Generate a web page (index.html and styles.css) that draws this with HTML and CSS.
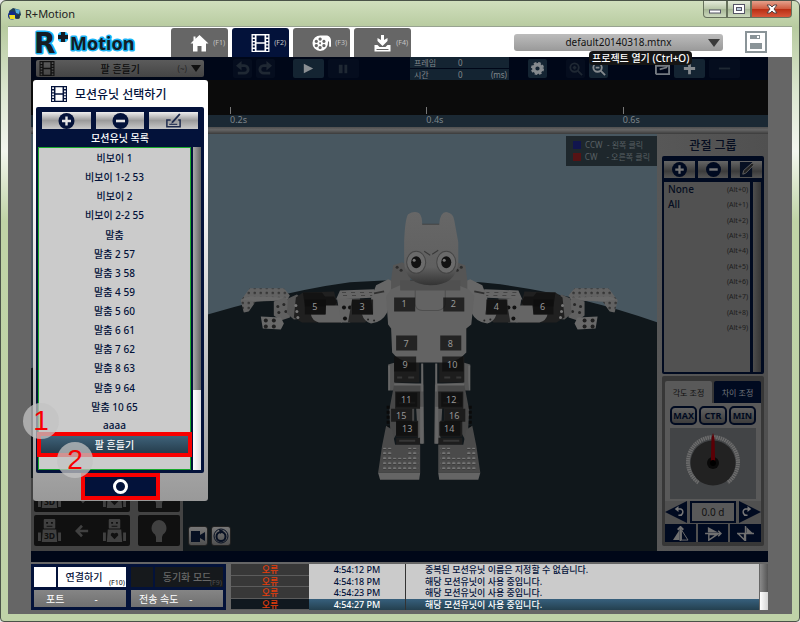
FILE: index.html
```html
<!DOCTYPE html>
<html lang="ko">
<head>
<meta charset="utf-8">
<title>R+Motion</title>
<link rel="stylesheet" href="styles.css">
</head>
<body>
<svg class="sprites" aria-hidden="true">
  <symbol id="film" viewBox="0 0 18 18">
    <path fill="currentColor" fill-rule="evenodd" d="M0 0H18V18H0ZM5 1.5V8.2H13V1.5ZM5 9.8V16.5H13V9.8ZM1.3 1.5V3.5H3.3V1.5ZM1.3 5V7H3.3V5ZM1.3 8.3V10.3H3.3V8.3ZM1.3 11.6V13.6H3.3V11.6ZM1.3 15V17H3.3V15ZM14.7 1.5V3.5H16.7V1.5ZM14.7 5V7H16.7V5ZM14.7 8.3V10.3H16.7V8.3ZM14.7 11.6V13.6H16.7V11.6ZM14.7 15V17H16.7V15Z"/>
  </symbol>
  <symbol id="plus" viewBox="0 0 16 16">
    <circle cx="8" cy="8" r="8" fill="var(--disc)"/><path d="M8 3.5V12.5M3.5 8H12.5" stroke="var(--mark)" stroke-width="2.4"/>
  </symbol>
  <symbol id="minus" viewBox="0 0 16 16">
    <circle cx="8" cy="8" r="8" fill="var(--disc)"/><path d="M3.5 8H12.5" stroke="var(--mark)" stroke-width="2.6"/>
  </symbol>
  <symbol id="edit" viewBox="0 0 18 16">
    <path d="M6 7H2V14H16V7H14" fill="none" stroke="#1d2a4d" stroke-width="1.6"/><path d="M4.5 11.5H13" stroke="#1d2a4d" stroke-width="1.2"/><path d="M16.5 1L9 9.5L6.5 11L7.5 8.2L15 0Z" fill="#1d2a4d"/>
  </symbol>
  <symbol id="undo" viewBox="0 0 16 16">
    <path d="M6 5H10A4 4 0 0 1 10 13H3" fill="none" stroke="currentColor" stroke-width="3"/><path d="M7 0V10L1 5Z" fill="currentColor"/>
  </symbol>
  <symbol id="robot" viewBox="0 0 24 24">
    <path fill="currentColor" fill-rule="evenodd" d="M7 0H17Q18 0 18 1V9Q18 10 17 10H7Q6 10 6 9V1Q6 0 7 0ZM8.500 3V5H10.500V3ZM13.500 3V5H15.500V3ZM9 7V8.200H15V7ZM5 11H19L20 24H4ZM0 14H3V23H0ZM21 14H24V23H21Z"/>
  </symbol>
  <symbol id="bulb" viewBox="0 0 16 22">
    <path fill="currentColor" d="M8 0A8 8 0 0 1 12 14.500L11 17V22H5V17L4 14.500A8 8 0 0 1 8 0Z"/>
  </symbol>
</svg>

<div class="window">
  <div class="titlebar">
    <svg class="app-icon" viewBox="0 0 14 14" aria-hidden="true">
      <path d="M1 4L5 1L12 3L13 8L9 12L2 10Z" fill="#1d3c56"/><circle cx="4" cy="8.500" r="4" fill="#122b88"/><path d="M1 8H7V12H2Z" fill="#e9dc22"/><path d="M7 2L12 3L11 7L8 6Z" fill="#52a9dc"/><circle cx="10" cy="10" r="2" fill="#234"/>
    </svg>
    <span class="app-name">R+Motion</span>
    <div class="controls">
      <button class="ctl" aria-label="최소화"><svg viewBox="0 0 12 10"><rect x=".5" y="6" width="11" height="3" fill="#fff" stroke="#556"/></svg></button>
      <button class="ctl" aria-label="최대화"><svg viewBox="0 0 12 10"><rect x=".5" y=".5" width="11" height="9" fill="#fff" stroke="#556"/><rect x="3.500" y="3.500" width="5" height="3" fill="#bcd" stroke="#556"/></svg></button>
      <button class="ctl close" aria-label="닫기"><svg viewBox="0 0 12 10"><path d="M1 1H4L6 3L8 1H11L8 5L11 9H8L6 7L4 9H1L4 5Z" fill="#fff" stroke="#544"/></svg></button>
    </div>
  </div>

  <div class="client">
    <header class="top">
      <svg class="logo" viewBox="0 0 104 28" role="img" aria-label="R+Motion">
        <g class="logo-glow"><text class="logo-r" x="0" y="24">R</text><text class="logo-text" x="36" y="21">Motion</text><path d="M24 8H34M29 3V13"/></g>
        <g class="logo-fill"><text class="logo-r" x="0" y="24">R</text><text class="logo-text" x="36" y="21">Motion</text><path d="M24 8H34M29 3V13"/></g>
      </svg>
      <nav class="tabs">
        <button class="tab"><svg viewBox="0 0 18 18"><path fill="#fff" d="M9 1L18 9.500H15.500V17.500H11V12H7V17.500H2.500V9.500H0L3 6.500V2.500H5V4.700Z"/></svg><span>(F1)</span></button>
        <button class="tab active"><svg><use href="#film"/></svg><span>(F2)</span></button>
        <button class="tab"><svg viewBox="0 0 20 18"><path fill="#fff" fill-rule="evenodd" d="M9 1H16Q20 2 20 7V13H18V8L17 7Q17 17 8.500 17.500A8 8 0 0 1 9 1ZM8.500 3.200A1.700 1.700 0 1 0 8.600 3.200ZM4.500 5.700A1.700 1.700 0 1 0 4.600 5.700ZM12.500 5.700A1.700 1.700 0 1 0 12.600 5.700ZM4.500 10A1.700 1.700 0 1 0 4.600 10ZM12.500 10A1.700 1.700 0 1 0 12.600 10ZM8.500 12.200A1.700 1.700 0 1 0 8.600 12.200ZM8.500 8.300A1 1 0 1 0 8.600 8.300Z"/></svg><span>(F3)</span></button>
        <button class="tab"><svg viewBox="0 0 18 18"><path fill="#fff" d="M7.500 1H10.500V6L14 4V7L9 12L4 7V4L7.500 6ZM1 11H4L6 13H12L14 11H17V17.500H1Z"/><path d="M3 15.500H15" stroke="#666"/></svg><span>(F4)</span></button>
      </nav>
      <div class="file">
        <select class="file-select" aria-label="프로젝트"><option>default20140318.mtnx</option></select>
        <div class="tooltip" role="tooltip">프로젝트 열기 (Ctrl+O)</div>
      </div>
      <button class="save" aria-label="저장"><svg viewBox="0 0 22 22"><path fill="#fff" stroke="#8a9498" stroke-width="2" d="M1 1H21V21H1Z"/><path fill="#8a9498" d="M5 4H15V8H5ZM5 12H17V18H5Z"/><path fill="#fff" d="M12 5H14V7H12Z"/></svg></button>
    </header>

    <main class="stage">
      <div class="toolbar">
        <button class="combo"><svg><use href="#film"/></svg><span class="combo-name">팔 흔들기</span><span class="combo-key">(~)</span><i class="caret"></i></button>
        <div class="group history">
          <button class="tool dim" aria-label="실행 취소"><svg><use href="#undo"/></svg></button>
          <button class="tool dim" aria-label="다시 실행"><svg class="flip"><use href="#undo"/></svg></button>
        </div>
        <div class="group play">
          <button class="tool wide" aria-label="재생"><svg viewBox="0 0 16 16"><path fill="#8b8f93" d="M3 3L13 8L3 13Z"/></svg></button>
          <button class="tool wide dim" aria-label="일시 정지"><svg viewBox="0 0 16 16"><path fill="currentColor" d="M3 4H7V13H3ZM9 4H12V13H9Z"/></svg></button>
        </div>
        <dl class="frames">
          <div><dt>프레임</dt><dd>0</dd><dd class="unit"></dd></div>
          <div><dt>시간</dt><dd>0</dd><dd class="unit">(ms)</dd></div>
        </dl>
        <button class="tool gear" aria-label="설정"><svg viewBox="0 0 16 16"><circle cx="8" cy="8" r="5.500" fill="none" stroke="#858a8e" stroke-width="3" stroke-dasharray="2.600 1.720"/><circle cx="8" cy="8" r="4" fill="none" stroke="#858a8e" stroke-width="3.500"/></svg></button>
        <div class="group zooms">
          <button class="tool dim" aria-label="확대"><svg viewBox="0 0 16 16"><g fill="none" stroke="currentColor" stroke-width="2"><circle cx="7" cy="7" r="4.500"/><path d="M10 10L15 15M5 7H9M7 5V9"/></g></svg></button>
          <button class="tool" aria-label="축소"><svg viewBox="0 0 16 16"><g fill="none" stroke="#858a8e" stroke-width="2"><circle cx="7" cy="7" r="4.500"/><path d="M10 10L15 15M5 7H9"/></g></svg></button>
        </div>
        <div class="group keys">
          <svg class="key-icon" viewBox="0 0 16 16" aria-hidden="true"><path d="M1 14V5H15V14H1M5 9L12 7L14 3" fill="none" stroke="#747a80" stroke-width="2"/></svg>
          <button class="tool wide" aria-label="추가"><svg viewBox="0 0 16 16"><path d="M8 2V14M2 8H14" stroke="#858a8e" stroke-width="3"/></svg></button>
          <button class="tool wide dim" aria-label="삭제"><svg viewBox="0 0 16 16"><path d="M2 8H14" stroke="currentColor" stroke-width="2"/></svg></button>
        </div>
      </div>

      <div class="timeline"><span>0.2s</span><span>0.4s</span><span>0.6s</span></div>
      <div class="splitter"></div>

      <div class="workspace">
        <section class="viewport">
          <svg class="scene" viewBox="31 134 626 416" preserveAspectRatio="xMidYMid slice">
            <defs>
              <linearGradient id="head" x1="0" y1="0" x2="0" y2="1"><stop offset="0" stop-color="#676767"/><stop offset=".75" stop-color="#606060"/><stop offset="1" stop-color="#333"/></linearGradient>
              <pattern id="studs" width="6" height="5" patternUnits="userSpaceOnUse"><rect width="6" height="5" fill="#626262"/><circle cx="3" cy="2.500" r="1.300" fill="#343434"/></pattern>
              <pattern id="sole" x="2" width="5" height="5" patternUnits="userSpaceOnUse"><ellipse cx="2.500" cy="2.500" rx="1.700" ry="1.300" fill="#777"/><path d="M1 3.800H4" stroke="#353535" stroke-width=".8"/></pattern>
              <g id="half">
                <path fill="url(#studs)" d="M250 288L284 288L290 295L287 300L256 301L249 311L244 312L241 300Z"/>
                <path fill="#686868" d="M241 299L249 296L288 297L288 299L256 301Z"/>
                <path fill="#606060" d="M274 301L285 297L291 302L290 317L281 320L274 315Z"/>
                <g fill="#272727"><circle cx="278" cy="306" r="1.500"/><circle cx="284" cy="304" r="1.500"/><circle cx="279" cy="312" r="1.500"/><circle cx="286" cy="311" r="1.500"/></g>
                <path fill="#696969" d="M261 316L281 317L284 323L281 329L263 328Z"/>
                <g fill="#202020"><circle cx="266" cy="320" r="2"/><circle cx="274" cy="320" r="2"/><circle cx="266" cy="326" r="2"/><circle cx="274" cy="326" r="2"/></g>
                <path fill="#555" d="M288 298L297 294L304 300L303 318L294 319L287 313Z"/>
                <path fill="#202020" d="M296 297L303 292L334 291L337 303L341 322L302 322L294 317Z"/>
                <path fill="#131313" d="M303 292H322L325 296H334L337 302L334 306H305Z"/>
                <g fill="#777"><circle cx="296" cy="305" r="1.500"/><circle cx="297" cy="311" r="1.500"/><circle cx="298" cy="317" r="1.500"/></g>
                <path fill="#656565" d="M326 305H340L342 322H319Q312 320 311 314H325Z"/>
                <path fill="#666" d="M340 290L374 289L376 297L336 299Z"/>
                <path d="M342 292H372M343 295H373" stroke="#444" stroke-dasharray="4 5"/>
                <path fill="#646464" d="M337 298L360 298L358 311L350 322H341Z"/>
                <g fill="#111"><circle cx="344" cy="307" r="2"/><circle cx="350" cy="307" r="2"/><circle cx="345" cy="318" r="2"/></g>
                <path fill="#282828" d="M352 299H374V314L365 322H348Z"/>
                <path fill="#676767" d="M371 298L376 285L388 279L396 282L387 312Q382 322 371 323Q364 321 362 314H373Z"/>
                <circle cx="368" cy="319" r="1" fill="#222"/><circle cx="374" cy="320" r="1" fill="#222"/>
                <path d="M374 293L384 291" stroke="#303030" stroke-width="2"/>
                <path fill="#555" d="M391 280L393 265L402 262L410 266V291H391Z"/>
                <circle cx="397" cy="267" r="1.500" fill="#2d2d2d"/><circle cx="401" cy="270" r="1.500" fill="#2d2d2d"/>
                <path fill="#171717" d="M391 325L397 359H403V326Z"/>
                <path fill="#555" d="M388 364L395 362V382L423 384V363L424 443L418 442L415 390H390Z"/>
                <path fill="#474747" d="M394 384H420V393H414V432H397L391 443L389 410Z"/>
                <path fill="#1d1d1d" d="M394 356H419V382H394ZM395 391H420V408H395ZM396 420H418V436H396ZM396 437H420V444H396Z"/>
                <path fill="#666" d="M388 365H390V390H388ZM394 383H421V385H394ZM421 363H423V391H421ZM420 406H423V443H420Z"/>
                <path d="M388 405V426" stroke="#0a0a0a" stroke-width="3" stroke-dasharray="3 2"/>
                <path fill="#4a4a4a" d="M386 425L392 429L395 444H420L420 472H378L382 445Z"/>
                <path fill="#656565" d="M378 472H420L419 479H380Z"/>
                <path fill="url(#sole)" d="M383 447H392V457H408V447H418V470H382Z"/>
                <path d="M397 377H402M408 377H414M399 440H415M399 402H415" stroke="#363636" stroke-width="2"/>
              </g>
            </defs>
            <rect x="-400" y="-200" width="1600" height="1100" fill="#485760"/>
            <path fill="#10171b" d="M-400 470L31 368L208 314Q290 290 350 282Q430 276 500 284Q580 295 657 322L1200 480V900H-400Z"/>
            <use href="#half"/>
            <use href="#half" transform="matrix(-1 0 0 1 858 0)"/>
            <path fill="#636363" d="M391 289L400 285H458L468 289L474 295L471 324L466 328V352Q459 360 448 362H410Q398 360 392 352L391 328L388 324L386 296Z"/>
            <path d="M415 286V304Q416 310 422 310H438Q444 309 445 304V286" fill="none" stroke="#4e4e4e"/>
            <path fill="#505050" d="M400 280H460V290H400Z"/>
            <path fill="url(#head)" d="M404 241Q405 218 408 214Q414 210 419 213Q422 216 422 224H439Q440 211 447 212Q453 213 454 220L458 242V262Q456 285 430 285Q405 284 404 262Z"/>
            <path d="M422 224H439" stroke="#444"/>
            <g fill="#6b6b6b" stroke="#454545"><ellipse cx="416" cy="262" rx="9.500" ry="11"/><ellipse cx="446" cy="262" rx="9.500" ry="11"/></g>
            <ellipse cx="416" cy="262" rx="5" ry="6" fill="#111"/><ellipse cx="446" cy="262" rx="5" ry="6" fill="#111"/>
            <circle cx="414" cy="260" r="1.500" fill="#777"/><circle cx="444" cy="260" r="1.500" fill="#777"/>
            <path d="M424 251L430 255M438 250L432 254" stroke="#393939"/>
            <g class="plates">
              <path d="M394 297H415V311H394ZM443 297H464V311H443ZM305 299H326V314H305ZM352 299H373V314H352ZM486 299H507V314H486ZM533 299H553V314H533ZM396 335H417V350H396ZM440 335H461V350H440ZM394 356H416V371H394ZM442 356H463V371H442ZM396 392H417V406H396ZM441 392H462V406H441ZM391 408H412V421H391ZM444 408H465V421H444ZM396 421H417V435H396ZM439 421H460V435H439Z"/>
            </g>
            <g class="ids">
              <text x="404" y="307">1</text><text x="453" y="307">2</text><text x="315" y="310">5</text><text x="362" y="310">3</text><text x="496" y="310">4</text><text x="542" y="310">6</text><text x="406" y="346">7</text><text x="450" y="346">8</text><text x="405" y="367">9</text><text x="452" y="367">10</text><text x="406" y="402">11</text><text x="451" y="402">12</text><text x="401" y="418">15</text><text x="454" y="418">16</text><text x="407" y="431">13</text><text x="449" y="431">14</text>
            </g>
          </svg>
          <ul class="legend">
            <li><i class="sw blue"></i><b>CCW</b> - 왼쪽 클릭</li>
            <li><i class="sw red"></i><b>CW</b> - 오른쪽 클릭</li>
          </ul>
          <div class="pose-tools">
            <div class="pose-panel">
              <button class="pose" aria-label="3D로 복사"><svg class="bot" viewBox="0 0 24 24"><use href="#robot"/><text x="12" y="21">3D</text></svg><svg class="arrow flip" viewBox="0 0 16 16"><path d="M15 8H3M8 2L2 8L8 14" fill="none" stroke="currentColor" stroke-width="3"/></svg><svg class="bot" viewBox="0 0 24 24"><use href="#robot"/><path fill="#101010" d="M12 21L8 17Q8 13 12 15Q16 13 16 17Z"/></svg></button>
              <button class="pose" aria-label="전구 켜기"><svg class="bulb"><use href="#bulb"/></svg></button>
              <button class="pose" aria-label="로봇에서 가져오기"><svg class="bot" viewBox="0 0 24 24"><use href="#robot"/><text x="12" y="21">3D</text></svg><svg class="arrow" viewBox="0 0 16 16"><path d="M15 8H3M8 2L2 8L8 14" fill="none" stroke="currentColor" stroke-width="3"/></svg><svg class="bot" viewBox="0 0 24 24"><use href="#robot"/><path fill="#101010" d="M12 21L8 17Q8 13 12 15Q16 13 16 17Z"/></svg></button>
              <button class="pose" aria-label="전구"><svg class="bulb"><use href="#bulb"/></svg></button>
            </div>
            <button class="cam" aria-label="카메라"><svg viewBox="0 0 16 16"><path fill="#071022" d="M1 3H10V7L15 4V13L10 10V14H1Z"/></svg></button>
            <button class="cam" aria-label="시점 회전"><svg viewBox="0 0 16 16"><g fill="none" stroke="#071022"><circle cx="8" cy="8" r="7"/><circle cx="8" cy="8.500" r="4.500" stroke-width="2"/></g><path d="M6 1L11 3L7 6Z" fill="#071022"/></svg></button>
          </div>
        </section>

        <aside class="side">
          <h2>관절 그룹</h2>
          <div class="joint-box">
            <div class="trio">
              <button class="silver" aria-label="그룹 추가"><svg><use href="#plus"/></svg></button>
              <button class="silver" aria-label="그룹 삭제"><svg><use href="#minus"/></svg></button>
              <button class="silver" aria-label="그룹 편집"><svg viewBox="0 0 16 16"><path fill="#071022" d="M1 0H14V16H1Z"/><path d="M4 13L5 9L14 1L16 3L7 12Z" fill="#222" stroke="#626262"/></svg></button>
            </div>
            <div class="joint-body">
              <ul class="joints">
                <li>None<span>(Alt+0)</span></li><li>All<span>(Alt+1)</span></li><li><span>(Alt+2)</span></li><li><span>(Alt+3)</span></li><li><span>(Alt+4)</span></li><li><span>(Alt+5)</span></li><li><span>(Alt+6)</span></li><li><span>(Alt+7)</span></li><li><span>(Alt+8)</span></li><li><span>(Alt+9)</span></li>
              </ul>
              <div class="rail"></div>
            </div>
          </div>
          <div class="angle">
            <div class="angle-tabs"><button class="on">각도 조정</button><button>차이 조정</button></div>
            <div class="angle-body">
              <div class="limits"><button>MAX</button><button>CTR</button><button>MIN</button></div>
              <div class="dial">
                <svg viewBox="0 0 86 71">
                  <path d="M28.500 54.500A25 25 0 1 1 57.500 54.500" fill="none" stroke="#6c6c6c" stroke-width="4" stroke-dasharray="1.600 .6"/>
                  <circle cx="43" cy="35" r="22.500" fill="#222"/><circle cx="43" cy="35" r="6" fill="#090909"/><path d="M40.800 35L41.500 10L43 5L44.500 10L45.200 35Z" fill="#5b0006"/><circle cx="43" cy="35" r="3" fill="#000"/>
                </svg>
              </div>
              <div class="value">
                <button class="turn left" aria-label="왼쪽 회전"><svg viewBox="0 0 16 16"><path d="M4 4H9A4 4 0 1 1 6 12" fill="none" stroke="#777" stroke-width="2"/><path d="M6 0V8L1 4Z" fill="#777"/></svg></button>
                <input aria-label="각도" value="0.0 d">
                <button class="turn right" aria-label="오른쪽 회전"><svg class="flip" viewBox="0 0 16 16"><path d="M4 4H9A4 4 0 1 1 6 12" fill="none" stroke="#777" stroke-width="2"/><path d="M6 0V8L1 4Z" fill="#777"/></svg></button>
              </div>
              <div class="flips">
                <button aria-label="좌우 대칭"><svg viewBox="0 0 18 16"><path d="M8 4V15H1Z" fill="#707070"/><path d="M10 4L17 15H10Z" fill="none" stroke="#707070"/><path d="M9 0V16M6 4L9 1L12 4" stroke="#707070" stroke-width="2" fill="none"/></svg></button>
                <button aria-label="상하 대칭"><svg viewBox="0 0 18 16"><path d="M3 1L14 7H3Z" fill="#707070"/><path d="M4 15L13 9H4ZM0 8H17M14 5L17 8L14 11" stroke="#707070" stroke-width="1.500" fill="none"/></svg></button>
                <button aria-label="대각 대칭"><svg viewBox="0 0 18 16"><path d="M10 1V8H17Z" fill="#707070"/><path d="M8 15V8H1ZM9 0V16M0 8H18" fill="none" stroke="#707070" stroke-width="1.500"/></svg></button>
              </div>
            </div>
          </div>
        </aside>
      </div>

      <div class="base"></div>

      <footer class="bottom">
        <div class="connect">
          <div class="pair"><span class="lamp"></span><button class="link">연결하기<small>(F10)</small></button></div>
          <div class="pair off"><span class="lamp"></span><button class="link">동기화 모드<small>(F9)</small></button></div>
          <div class="stat"><span>포트</span><span>-</span></div>
          <div class="stat"><span>전송 속도</span><span>-</span></div>
        </div>
        <table class="log">
          <tbody>
            <tr><th>오류</th><td class="time">4:54:12 PM</td><td>중복된 모션유닛 이름은 지정할 수 없습니다.</td></tr>
            <tr><th>오류</th><td class="time">4:54:18 PM</td><td>해당 모션유닛이 사용 중입니다.</td></tr>
            <tr><th>오류</th><td class="time">4:54:23 PM</td><td>해당 모션유닛이 사용 중입니다.</td></tr>
            <tr class="current"><th>오류</th><td class="time">4:54:27 PM</td><td>해당 모션유닛이 사용 중입니다.</td></tr>
          </tbody>
        </table>
        <div class="log-rail"><i></i></div>
      </footer>

      <section class="dialog" role="dialog" aria-labelledby="dialog-title">
        <h1 id="dialog-title"><svg><use href="#film"/></svg>모션유닛 선택하기</h1>
        <div class="units">
          <div class="trio">
            <button class="silver" aria-label="추가"><svg><use href="#plus"/></svg></button>
            <button class="silver" aria-label="삭제"><svg><use href="#minus"/></svg></button>
            <button class="silver" aria-label="이름 변경"><svg><use href="#edit"/></svg></button>
          </div>
          <h3>모션유닛 목록</h3>
          <div class="unit-body">
            <ul class="unit-list">
              <li>비보이 1</li><li>비보이 1-2 53</li><li>비보이 2</li><li>비보이 2-2 55</li><li>말춤</li><li>말춤 2 57</li><li>말춤 3 58</li><li>말춤 4 59</li><li>말춤 5 60</li><li>말춤 6 61</li><li>말춤 7 62</li><li>말춤 8 63</li><li>말춤 9 64</li><li>말춤 10 65</li><li>aaaa</li><li class="selected">팔 흔들기<span class="step one">1</span></li>
            </ul>
            <div class="unit-rail"><i></i></div>
          </div>
        </div>
        <div class="confirm"><button class="ok" aria-label="확인"><i></i></button><span class="step two">2</span></div>
      </section>
    </main>
  </div>
</div>
</body>
</html>
```

FILE: styles.css
```css
* { box-sizing: border-box; }
body {
  margin: 0;
  background: #e8e8e8;
  color: #03123a;
  font-family: "Noto Sans", "Noto Sans CJK KR", sans-serif;
  font-size: 10px;
}
button, select, input { font: inherit; color: inherit; border: 0; padding: 0; margin: 0; background: none; }
button { display: flex; align-items: center; justify-content: center; }
ul, dl, dd, h1, h2, h3 { margin: 0; padding: 0; list-style: none; }
svg { display: block; }
.sprites { position: absolute; width: 0; height: 0; }
.flip { transform: scaleX(-1); }

/* Window frame */
.window {
  display: flex;
  flex-direction: column;
  min-height: 100vh;
  padding: 0 7px 7px;
  border: 1px solid #4a5348;
  border-radius: 6px 6px 4px 4px;
  background: linear-gradient(#d0dfbd, #b8cba0 26px, #dbe6cf 90px, #f3f6ef 150px, #c0d4a6 220px, #bfd2a8);
}
.titlebar {
  display: flex;
  align-items: center;
  gap: 3px;
  height: 25px;
  color: #222;
}
.app-icon { width: 14px; height: 14px; }
.app-name { font-size: 11px; }
.controls { display: flex; align-self: flex-start; margin-left: auto; }
.ctl {
  width: 24px;
  height: 17px;
  border: 1px solid #66715c;
  border-top: 0;
  background: linear-gradient(#e3ead9, #b8c6a8 50%, #a5b694 50%, #cbd8bd);
}
.ctl:first-child { border-radius: 0 0 0 4px; }
.ctl svg { width: 12px; height: 10px; }
.ctl.close { width: 41px; border-radius: 0 0 4px; background: linear-gradient(#e5a18c, #cf5a3e 50%, #b82d12 50%, #d8563a); }
.client { display: flex; flex-direction: column; flex: 1; background: #666; border-top: 1px solid #98a391; }

/* Header */
.top { display: flex; align-items: flex-end; height: 30px; padding: 0 25px 0 26px; background: #fff; }
.logo { width: 104px; height: 28px; overflow: visible; }
.logo text { font-weight: 700; }
.logo-r { font-size: 28px; font-family: "DejaVu Sans", sans-serif; }
.logo-text { font-size: 18px; }
.logo-glow { fill: #18b3f5; stroke: #18b3f5; stroke-width: 3; stroke-linejoin: round; }
.logo-glow path { stroke-width: 7; }
.logo-fill { fill: #141c24; stroke: none; }
.logo-fill path { stroke: #141c24; stroke-width: 4; }
.tabs { display: flex; gap: 4px; margin-left: 33px; }
.tab {
  width: 57px;
  height: 29px;
  gap: 4px;
  justify-content: flex-end;
  padding-right: 3px;
  border-radius: 3px 3px 0 0;
  background: #666;
  color: #c4c4c4;
  font-size: 7px;
}
.tab.active { background: #03123a; }
.tab svg { width: 19px; height: 18px; color: #fff; }
.file { position: relative; flex: 0 1 209px; margin-left: auto; align-self: center; }
.file-select {
  appearance: none;
  display: block;
  width: 100%;
  height: 17px;
  padding: 0 22px 0 22px;
  border-radius: 3px;
  background: linear-gradient(#bcbcbc, #999);
  color: #111;
  font-size: 10px;
  text-align-last: center;
}
.file::after {
  content: "";
  position: absolute;
  top: 5px;
  right: 3px;
  border: 6px solid transparent;
  border-top: 8px solid #3b3b3b;
  border-bottom: 0;
}
.tooltip {
  position: absolute;
  z-index: 3;
  top: 17px;
  left: 75px;
  padding: 0 3px;
  border-radius: 4px;
  background: #151515;
  color: #fff;
  font-size: 10px;
  font-weight: 500;
  line-height: 14px;
  white-space: nowrap;
}
.save { align-self: center; margin-left: 22px; }
.save svg { width: 22px; height: 22px; }

/* Stage */
.stage { position: relative; display: flex; flex-direction: column; flex: 1; margin: 0 24px 4px 23px; }
.toolbar { display: flex; align-items: center; height: 23px; padding: 0 28px 0 5px; background: #000718; }
.combo {
  gap: 4px;
  width: 168px;
  height: 17px;
  padding: 0 3px;
  border-radius: 2px;
  background: linear-gradient(#5b5b5b, #454545);
  color: #0c0c0c;
}
.combo svg { width: 16px; height: 15px; color: #111; }
.combo-name { flex: 1; padding-left: 8px; font-weight: 500; }
.combo-key { color: #262626; font-size: 8px; }
.caret { border: 5px solid transparent; border-top: 7px solid #111; border-bottom: 0; }
.group { display: flex; align-items: center; gap: 4px; }
.history { margin-left: 29px; }
.play { margin-left: 18px; }
.tool { width: 19px; height: 19px; border-radius: 2px; background: #142432; color: #26303a; }
.tool.wide { width: 31px; }
.tool.dim { background: #050d1e; color: #1f2833; }
.tool svg { width: 15px; height: 15px; }
.frames { display: flex; flex-direction: column; gap: 1px; width: 99px; margin-left: 51px; color: #82888c; }
.frames div { display: grid; grid-template-columns: 40px 1fr 30px; height: 11px; padding: 0 2px 0 4px; background: #142432; font-size: 8px; line-height: 11px; }
.frames dd { padding-left: 4px; }
.frames .unit { padding: 0; text-align: right; }
.gear { margin-left: 19px; }
.zooms { margin-left: 19px; }
.keys { margin-left: auto; }
.key-icon { width: 15px; height: 15px; }
.timeline {
  display: flex;
  height: 47px;
  padding: 27px 0 0 27%;
  background: linear-gradient(#0b0b0b 35px, #1b2934 35px);
  color: #7d858a;
  font-size: 9px;
  line-height: 12px;
}
.timeline span { flex: 0 0 36.5%; }
.timeline span:last-child { flex: 1; }
.timeline span::before { content: ""; display: block; width: 1px; height: 7px; background: #777; }
.splitter { height: 7px; background: linear-gradient(#4f4f4f, #656565 40%, #3b3b3b); }

/* Workspace */
.workspace { display: grid; grid-template-columns: 1fr 111px; flex: 1; }
.viewport { position: relative; display: flex; align-items: flex-end; overflow: hidden; }
.scene { position: absolute; inset: 0; width: 100%; height: 100%; }
.plates { fill: #0d0d0d; fill-opacity: .75; }
.ids { fill: #979797; font-size: 9px; text-anchor: middle; }
.legend {
  position: absolute;
  top: 2px;
  right: 0;
  width: 91px;
  padding: 3px 7px;
  background: #1e272c;
  color: #596064;
  font-size: 8px;
  line-height: 12px;
  white-space: nowrap;
}
.legend li { display: flex; align-items: center; gap: 4px; }
.legend b { width: 18px; font-weight: 400; }
.sw { width: 8px; height: 8px; }
.sw.blue { background: #11154e; }
.sw.red { background: #551315; }
.pose-tools { position: relative; display: flex; align-items: flex-end; gap: 3px; }
.pose-panel {
  display: grid;
  grid-template-columns: 96px 42px;
  gap: 3px 8px;
  margin-right: 2px;
  padding: 3px 3px 5px;
  background: #434343;
}
.pose { gap: 14px; height: 31px; border-radius: 2px; background: #101010; color: #404040; }
.bot { width: 23px; height: 23px; }
.bot text { fill: #101010; font-size: 9px; font-weight: 700; text-anchor: middle; }
.arrow { width: 14px; height: 14px; }
.bulb { width: 16px; height: 22px; }
.cam { width: 20px; height: 20px; margin-bottom: 5px; border: 1px solid #222; border-radius: 3px; background: linear-gradient(#777, #505050); }
.cam svg { width: 16px; height: 16px; }

.side { display: flex; flex-direction: column; padding: 4px 4px 5px 5px; background: linear-gradient(90deg, #575757, #505050); }
.side h2 { height: 18px; font-size: 12px; font-weight: 500; line-height: 15px; text-align: center; color: #050d20; }
.joint-box { display: flex; flex-direction: column; flex: 1; padding: 5px 2px 2px; border-radius: 2px; background: #000a20; }
.trio { display: flex; gap: 3px; --mark: #777; --disc: #000a20; }
.silver { flex: 1; height: 17px; background: linear-gradient(#666, #3c3c3c 60%, #555); }
.silver svg { width: 15px; height: 15px; }
.joint-body { display: flex; flex: 1; gap: 3px; margin-top: 4px; }
.joints { display: flex; flex-direction: column; justify-content: space-between; align-self: stretch; flex: 1; padding: 0 2px 37px 4px; background: #515151; color: #050d20; font-weight: 500; }
.joints li { display: flex; line-height: 15px; }
.joints span { margin-left: auto; color: #1c1c1c; font-size: 7px; font-weight: 400; }
.rail { width: 8px; background: linear-gradient(90deg, #4d4d4d, #343434); margin-right: 1px; }
.angle { margin-top: 2px; padding: 5px 3px 4px; border-radius: 2px; background: #373737; }
.angle-tabs { display: flex; gap: 2px; }
.angle-tabs button { flex: 1; height: 22px; border-radius: 2px 2px 0 0; background: #000a20; color: #72777d; font-size: 8px; white-space: nowrap; }
.angle-tabs .on { background: #595959; color: #101010; }
.angle-body { display: flex; flex-direction: column; background: #595959; }
.limits { display: flex; gap: 2px; padding: 3px 5px; }
.limits button { flex: 1; height: 19px; border: 2px solid #000a20; border-radius: 5px; background: linear-gradient(#606060, #3c3c3c); color: #000a20; font-size: 9px; font-weight: 700; }
.dial { margin: 0 5px 2px; background: #424446; }
.dial svg { width: 100%; height: 71px; }
.value { display: flex; justify-content: space-between; height: 22px; background: #505050; }
.turn { width: 22px; background: #000a20; }
.turn svg { width: 12px; height: 12px; }
.turn.left { clip-path: polygon(0 50%, 100% 0, 100% 100%); padding-left: 8px; }
.turn.right { clip-path: polygon(0 0, 100% 50%, 0 100%); padding-right: 8px; }
.value input { width: 46px; min-width: 0; border: 2px solid #000a20; background: #595959; color: #111; text-align: center; }
.flips { display: flex; gap: 2px; padding-top: 1px; background: #505050; }
.flips button { flex: 1; height: 18px; background: #000a20; }
.flips svg { width: 17px; height: 15px; }

/* Status area */
.base { height: 11px; background: #000718; }
.bottom { display: flex; height: 48px; padding-top: 2px; }
.connect { display: grid; grid-template-columns: 1fr 1fr; grid-template-rows: 20px 17px; gap: 3px 5px; width: 195px; padding: 3px; background: #03123a; }
.pair { display: flex; gap: 2px; }
.lamp { width: 22px; background: #fff; }
.link { position: relative; flex: 1; padding: 0 16px 2px 0; background: #fff; color: #03123a; font-weight: 500; }
.link small { position: absolute; right: 1px; bottom: 0; font-size: 7px; line-height: 8px; color: #333; }
.off .lamp, .off .link { background: #16191c; color: #686868; }
.off .link { padding-right: 4px; }
.off small { color: #484848; }
.stat { display: grid; grid-template-columns: 48% 1fr; align-items: center; padding-left: 12px; background: linear-gradient(#858585, #707070); color: #fff; white-space: nowrap; }
.stat:last-child { padding-left: 8px; }
.stat span + span { padding-left: 10px; }
.log { flex: 1; height: 46px; margin-left: 5px; border-spacing: 0; background: #cbcbcb; line-height: 11px; font-size: 9px; font-weight: 500; table-layout: fixed; }
.log th, .log td { padding: 0; height: 11px; text-align: left; white-space: nowrap; }
.log th { width: 78px; background: #383838; color: #e53d0b; box-shadow: inset 0 -1px #5c5c5c; text-align: center; font-weight: 500; }
.log .time { width: 97px; padding: 0; border-right: 1px solid #333; text-align: center; }
.log td { padding-left: 19px; }
.log .current td { background: linear-gradient(#37607d, #24404f); color: #fff; }
.log .current th { background: #10181f; }
.log-rail { display: flex; align-items: flex-end; width: 8px; margin-left: 1px; background: linear-gradient(90deg, #8a8a8a, #555); }
.log-rail i { flex: 1; height: 18px; background: linear-gradient(90deg, #fff, #d5d5d5); }

/* Motion unit dialog */
.dialog {
  position: absolute;
  z-index: 2;
  top: 23px;
  left: 2px;
  width: 175px;
  padding: 0 4px 1px 3px;
  border-radius: 3px;
  background: linear-gradient(#fff 20%, #999);
}
.dialog h1 { display: flex; align-items: center; gap: 8px; height: 27px; padding-left: 15px; font-size: 12px; font-weight: 500; }
.dialog h1 svg { width: 16px; height: 16px; }
.units { padding: 5px 2px 3px; border-radius: 2px; background: #03123a; }
.units .trio { gap: 5px; padding: 0 4px; --mark: #e5e5e5; --disc: #03123a; }
.units .silver { background: linear-gradient(#eee, #9b9b9b 50%, #c9c9c9); }
.units .silver svg { width: 17px; height: 16px; }
.units h3 { color: #fff; font-size: 10px; font-weight: 500; line-height: 18px; text-align: center; }
.unit-body { display: flex; gap: 2px; }
.unit-list { display: flex; flex-direction: column; flex: 1; height: 323px; padding-bottom: 15px; border: 1px solid #18a92b; background: #cbcbcb; }
.unit-list li { flex: 1; display: flex; align-items: center; justify-content: center; font-weight: 500; }
.unit-list .selected { position: relative; background: linear-gradient(#40647c, #243b4a); color: #fff; }
.selected::after { content: ""; position: absolute; inset: -3px -2px; border: 4px solid #f80000; }
.unit-rail { display: flex; align-items: flex-end; width: 8px; margin-right: 1px; background: linear-gradient(90deg, #aaa, #626262); }
.unit-rail i { flex: 1; height: 80px; background: linear-gradient(90deg, #fff, #ddd); }
.confirm { position: relative; display: flex; justify-content: center; }
.ok { width: 79px; height: 27px; margin-left: 1px; border: 4px solid #f80000; background: #03123a; }
.ok i { width: 15px; height: 15px; border: 3px solid #fff; border-radius: 50%; }
.step {
  position: absolute;
  z-index: 1;
  display: flex;
  align-items: center;
  justify-content: center;
  width: 36px;
  height: 36px;
  border-radius: 50%;
  background: rgba(195, 195, 195, .75);
  color: #f80000;
  font: 28px "Liberation Sans", sans-serif;
}
.step.one { top: -32px; left: -16px; }
.step.two { top: -31px; left: 21px; }
```
